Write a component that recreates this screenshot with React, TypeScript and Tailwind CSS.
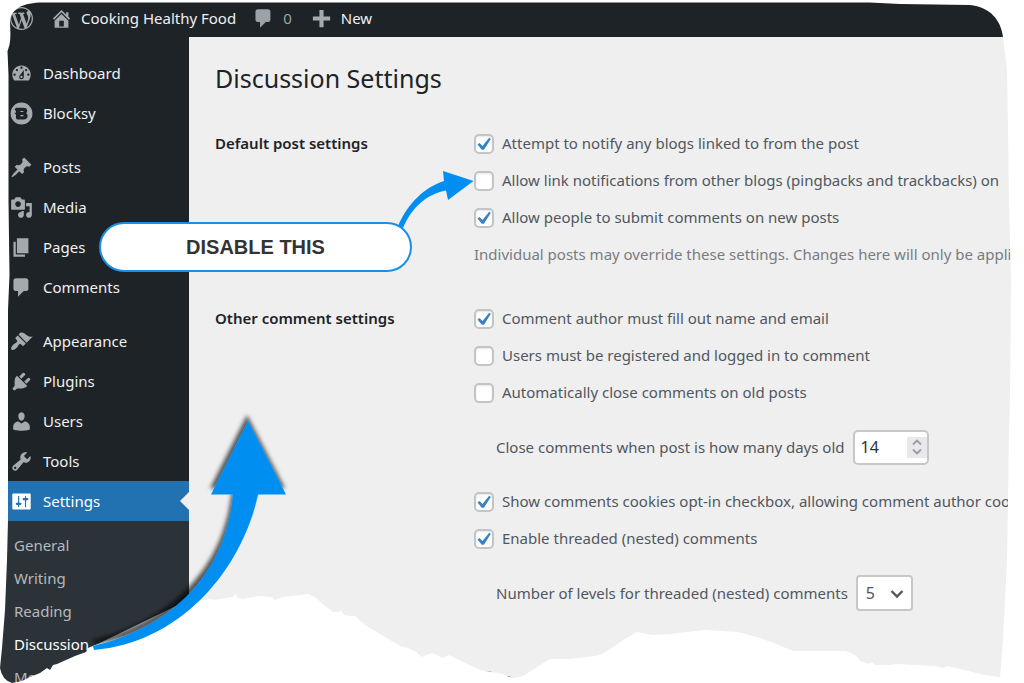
import { useState } from "react";
import type { ReactNode } from "react";
import clsx from "clsx";

const icons = {
    wordpress:
        "M20 10c0-5.51-4.49-10-10-10C4.48 0 0 4.49 0 10c0 5.52 4.48 10 10 10 5.51 0 10-4.48 10-10zM7.78 15.37L4.37 6.22c.55-.02 1.17-.08 1.17-.08.5-.06.44-1.13-.06-1.11 0 0-1.45.11-2.37.11-.18 0-.37 0-.58-.01C4.12 2.69 6.87 1.11 10 1.11c2.33 0 4.45.87 6.05 2.34-.68-.11-1.65.39-1.65 1.58 0 .74.45 1.36.9 2.1.35.61.55 1.36.55 2.46 0 1.49-1.4 5-1.4 5l-3.03-8.37c.54-.02.82-.17.82-.17.5-.05.44-1.25-.06-1.22 0 0-1.44.12-2.38.12-.87 0-2.33-.12-2.33-.12-.5-.03-.56 1.2-.06 1.22l.92.08 1.26 3.41zM17.41 10c.24-.64.74-1.87.43-4.25.7 1.29 1.05 2.71 1.05 4.25 0 3.29-1.73 6.24-4.4 7.78.97-2.59 1.94-5.2 2.92-7.78zM6.1 18.09C3.12 16.65 1.11 13.53 1.11 10c0-1.3.23-2.48.72-3.59C3.25 10.3 4.67 14.2 6.1 18.09zm4.03-6.63l2.58 6.98c-.86.29-1.76.45-2.71.45-.79 0-1.57-.11-2.29-.33.81-2.38 1.62-4.74 2.42-7.1z",
    home: "M16 8.5l1.53 1.53-1.06 1.06L10 4.6l-6.47 6.49-1.06-1.06L10 2.5l4 4v-2h2v4zm-6-2.46l6 5.99V18H4v-5.97zM12 17v-5H8v5h4z",
    comments:
        "M5 2h9c1.1 0 2 .9 2 2v7c0 1.1-.9 2-2 2h-2l-5 5v-5H5c-1.1 0-2-.9-2-2V4c0-1.1.9-2 2-2z",
    plus: "M8.2 2.5h3.6v5.7h5.7v3.6h-5.7v5.7H8.2v-5.7H2.5V8.2h5.7z",
    dashboard:
        "M3.76 16h12.48c1.1-1.37 1.76-3.11 1.76-5 0-4.42-3.58-8-8-8s-8 3.58-8 8c0 1.89.66 3.63 1.76 5zM10 4c.55 0 1 .45 1 1s-.45 1-1 1-1-.45-1-1 .45-1 1-1zM6 6c.55 0 1 .45 1 1s-.45 1-1 1-1-.45-1-1 .45-1 1-1zm8 0c.55 0 1 .45 1 1s-.45 1-1 1-1-.45-1-1 .45-1 1-1zm-5.37 5.55L12 7v6c0 1.1-.9 2-2 2s-2-.9-2-2c0-.57.24-1.08.63-1.45zM4 10c.55 0 1 .45 1 1s-.45 1-1 1-1-.45-1-1 .45-1 1-1zm12 0c.55 0 1 .45 1 1s-.45 1-1 1-1-.45-1-1 .45-1 1-1zm-5 3c0-.55-.45-1-1-1s-1 .45-1 1 .45 1 1 1 1-.45 1-1z",
    blocksy:
        "M10 .5a9.500 9.500 0 1 0 0 19 9.500 9.500 0 0 0 0-19zM5.200 5h6.600c2 0 3.200 1.100 3.200 2.700 0 .9-.4 1.700-1 2.100.8.5 1.300 1.300 1.300 2.400 0 1.800-1.300 3-3.400 3H6.200l-1-1.100v-3.100L3.900 9.400h1.300V8L4 6.500zM9 7.900v.9h2.300c.6 0 .6-.9 0-.9zM9 11.400v.9h2.500c.6 0 .6-.9 0-.9z",
    posts: "M10.44 3.02l1.82-1.82 6.36 6.35-1.83 1.82c-1.05-.68-2.48-.57-3.41.36l-.75.75c-.92.93-1.04 2.35-.35 3.41l-1.83 1.82-2.41-2.41-2.8 2.79c-.42.42-3.38 2.71-3.8 2.29s1.86-3.39 2.28-3.81l2.79-2.79L4.1 9.36l1.83-1.82c1.05.69 2.48.57 3.4-.36l.75-.75c.93-.92 1.05-2.35.36-3.41z",
    media: "M13 11V4c0-.55-.45-1-1-1h-1.67L9 1H5L3.67 3H2c-.55 0-1 .45-1 1v7c0 .55.45 1 1 1h10c.55 0 1-.45 1-1zM7 4.5c1.38 0 2.5 1.12 2.5 2.5S8.38 9.5 7 9.5 4.5 8.38 4.5 7 5.62 4.5 7 4.5zM14 6h5v10.5c0 1.38-1.12 2.5-2.5 2.5S14 17.88 14 16.5s1.12-2.5 2.5-2.5c.17 0 .34.02.5.05V9h-3V6zm-4 8.05V13h2v3.5c0 1.38-1.12 2.5-2.5 2.5S7 17.88 7 16.5 8.12 14 9.5 14c.17 0 .34.02.5.05z",
    pages: "M6 15V2h10v13H6zm-1 1h8v2H3V5h2v11z",
    appearance:
        "M14.48 11.06L7.41 3.99l1.5-1.5c.5-.56 2.3-.47 3.51.32 1.21.8 1.43 1.28 2.91 2.1 1.18.64 2.45 1.26 4.45.85zm-.71.71L6.7 4.7 4.93 6.47c-.39.39-.39 1.02 0 1.41l1.06 1.06c.39.39.39 1.03 0 1.42-.6.6-1.43 1.11-2.21 1.69-.35.26-.7.53-1.01.84C1.43 14.23.4 16.08 1.4 17.07c.99 1 2.84-.03 4.18-1.36.31-.31.58-.66.85-1.02.57-.78 1.08-1.61 1.69-2.21.39-.39 1.02-.39 1.41 0l1.06 1.06c.39.39 1.02.39 1.41 0z",
    plugins:
        "M13.11 4.36L9.87 7.6 8 5.73l3.24-3.24c.35-.34 1.05-.2 1.56.32.52.51.66 1.21.31 1.55zm-8 1.77l.91-1.12 9.01 9.01-1.19.84c-.71.71-2.63 1.16-3.82 1.16H6.14L4.9 17.26c-.59.59-1.54.59-2.12 0-.59-.58-.59-1.53 0-2.12l1.24-1.24v-3.88c0-1.13.4-3.19 1.09-3.89zm7.26 3.97l3.24-3.24c.34-.35 1.04-.21 1.55.31.52.51.66 1.21.31 1.55l-3.24 3.25z",
    users: "M10 9.25c-2.27 0-2.73-3.44-2.73-3.44C7 4.02 7.82 2 9.97 2c2.16 0 2.98 2.02 2.71 3.81 0 0-.41 3.44-2.68 3.44zm0 2.57L12.72 10c2.39 0 4.52 2.33 4.52 4.53v2.49s-3.65 1.13-7.24 1.13c-3.65 0-7.24-1.13-7.24-1.13v-2.49c0-2.25 1.94-4.48 4.47-4.48z",
    tools: "M16.68 9.77c-1.34 1.34-3.3 1.67-4.95.99l-5.41 6.52c-.99.99-2.59.99-3.58 0s-.99-2.59 0-3.57l6.52-5.42c-.68-1.65-.35-3.61.99-4.95 1.28-1.28 3.12-1.62 4.72-1.06l-2.89 2.89 2.82 2.82 2.86-2.87c.53 1.58.18 3.39-1.08 4.65zM3.81 16.21c.4.39 1.04.39 1.43 0 .4-.4.4-1.04 0-1.43-.39-.4-1.03-.4-1.43 0-.39.39-.39 1.03 0 1.43z",
    settings:
        "M18 16V4c0-.55-.45-1-1-1H3c-.55 0-1 .45-1 1v12c0 .55.45 1 1 1h14c.55 0 1-.45 1-1zM8 11h1c.55 0 1 .45 1 1s-.45 1-1 1H8v1.5c0 .28-.22.5-.5.5s-.5-.22-.5-.5V13H6c-.55 0-1-.45-1-1s.45-1 1-1h1V5.5c0-.28.22-.5.5-.5s.5.22.5.5V11zm5-2h-1c-.55 0-1-.45-1-1s.45-1 1-1h1V5.5c0-.28.22-.5.5-.5s.5.22.5.5V7h1c.55 0 1 .45 1 1s-.45 1-1 1h-1v5.5c0 .28-.22.5-.5.5s-.5-.22-.5-.5V9z",
};

type IconName = keyof typeof icons;

const Icon = ({ name, className }: { name: IconName; className?: string }) => (
    <svg
        viewBox="0 0 20 20"
        fill="currentColor"
        fillRule="evenodd"
        aria-hidden="true"
        className={clsx("size-[23px] shrink-0", className)}
    >
        <path d={icons[name]} />
    </svg>
);

const menuGroups: { label: string; icon: IconName }[][] = [
    [
        { label: "Dashboard", icon: "dashboard" },
        { label: "Blocksy", icon: "blocksy" },
    ],
    [
        { label: "Posts", icon: "posts" },
        { label: "Media", icon: "media" },
        { label: "Pages", icon: "pages" },
        { label: "Comments", icon: "comments" },
    ],
    [
        { label: "Appearance", icon: "appearance" },
        { label: "Plugins", icon: "plugins" },
        { label: "Users", icon: "users" },
        { label: "Tools", icon: "tools" },
        { label: "Settings", icon: "settings" },
    ],
];

const submenu = ["General", "Writing", "Reading", "Discussion", "Media"];

const AdminBar = () => (
    <header className="flex h-[37px] shrink-0 items-center bg-[#1d2327] pl-[10px] text-[#f0f0f1]">
        <a href="#" aria-label="WordPress" className="text-[#a7aaad]">
            <Icon name="wordpress" />
        </a>
        <a href="#" className="ml-[17px] flex items-center gap-2">
            <Icon name="home" className="text-[#a7aaad]" />
            Cooking Healthy Food
        </a>
        <a href="#" className="ml-4 flex items-center gap-2 text-[#9ca2a7]">
            <Icon name="comments" />0
        </a>
        <a href="#" className="ml-[18px] flex items-center gap-2">
            <Icon name="plus" className="text-[#a7aaad]" />
            New
        </a>
    </header>
);

const Sidebar = () => (
    <nav className="w-[189px] shrink-0 bg-[#1d2327] pt-4 text-[#f0f0f1]">
        <div className="flex flex-col gap-[14px]">
            {menuGroups.map((group, i) => (
                <ul key={i}>
                    {group.map(({ label, icon }) => {
                        const active = label === "Settings";
                        return (
                            <li key={label}>
                                <a
                                    href="#"
                                    className={clsx(
                                        "relative flex h-10 items-center gap-[10px] pl-[10px]",
                                        active && "bg-[#2271b1] text-white",
                                    )}
                                >
                                    <Icon
                                        name={icon}
                                        className={active ? "text-white" : "text-[#a7aaad]"}
                                    />
                                    {label}
                                    {active && (
                                        <span className="absolute top-1/2 right-0 -translate-y-1/2 border-y-[9px] border-r-[9px] border-y-transparent border-r-[#efefef]" />
                                    )}
                                </a>
                            </li>
                        );
                    })}
                </ul>
            ))}
        </div>
        <ul className="h-full bg-[#2c3338] pt-2 pl-[14px] text-[#b4b9be]">
            {submenu.map((item) => (
                <li key={item}>
                    <a
                        href="#"
                        className={clsx(
                            "flex h-[33px] items-center",
                            item === "Discussion" && "text-white",
                        )}
                    >
                        {item}
                    </a>
                </li>
            ))}
        </ul>
    </nav>
);

const Check = ({ label, checked = false }: { label: string; checked?: boolean }) => {
    const [on, setOn] = useState(checked);

    return (
        <label className="flex h-[37px] items-center gap-2 whitespace-nowrap">
            <span className="grid shrink-0 place-items-center">
                <input
                    type="checkbox"
                    checked={on}
                    onChange={() => setOn(!on)}
                    className="col-start-1 row-start-1 size-5 appearance-none rounded-[5px] border-2 border-[#c3c4c7] bg-white shadow-[inset_0_1px_2px_rgba(0,0,0,0.1)]"
                />
                {on && (
                    <svg
                        viewBox="0 0 20 20"
                        className="pointer-events-none col-start-1 row-start-1 size-5"
                        aria-hidden="true"
                    >
                        <path
                            d="M15.200 3.800l1.600 1.200-6.900 10.700-2.100 0-4.300-5.200 2-1.600 3 3.200z"
                            fill="#3582c4"
                        />
                    </svg>
                )}
            </span>
            {label}
        </label>
    );
};

const Section = ({ title, children }: { title: string; children: ReactNode }) => (
    <section className="flex">
        <h2 className="w-[259px] shrink-0 pt-[6px] leading-6 font-semibold text-[#1d2327]">
            {title}
        </h2>
        <div className="min-w-0 flex-1">{children}</div>
    </section>
);

const SettingsForm = () => (
    <main className="min-w-0 flex-1 overflow-hidden bg-[#efefef] pt-[23px] pl-[26px] text-[#50575e]">
        <h1 className="text-[25px] leading-9 text-[#1d2327]">Discussion Settings</h1>
        <form className="mt-[29px] flex flex-col gap-[27px]">
            <Section title="Default post settings">
                <Check checked label="Attempt to notify any blogs linked to from the post" />
                <Check label="Allow link notifications from other blogs (pingbacks and trackbacks) on" />
                <Check checked label="Allow people to submit comments on new posts" />
                <p className="flex h-[37px] items-center whitespace-nowrap text-[#787c82]">
                    Individual posts may override these settings. Changes here will only be
                    applied to new posts.
                </p>
            </Section>
            <Section title="Other comment settings">
                <Check checked label="Comment author must fill out name and email" />
                <Check label="Users must be registered and logged in to comment" />
                <Check label="Automatically close comments on old posts" />
                <div className="flex h-[72px] items-center gap-2 pl-[22px] whitespace-nowrap">
                    <label htmlFor="close-days">
                        Close comments when post is how many days old
                    </label>
                    <span className="relative">
                        <input
                            id="close-days"
                            type="number"
                            defaultValue={14}
                            className="block h-[35px] w-[76px] appearance-none rounded-[5px] border-2 border-[#c6c7c9] bg-white pl-[6px] text-base text-[#2c3338] [-moz-appearance:textfield] [&::-webkit-inner-spin-button]:appearance-none"
                        />
                        <span className="pointer-events-none absolute inset-y-[7px] right-[2px] grid w-5 place-items-center bg-[#e9e9ed]">
                            <svg viewBox="0 0 10 16" className="h-4 w-[10px]" aria-hidden="true">
                                <path
                                    d="M1 5.500l4-4 4 4M1 10.500l4 4 4-4"
                                    fill="none"
                                    stroke="#9c9c9c"
                                    strokeWidth="1.800"
                                />
                            </svg>
                        </span>
                    </span>
                </div>
                <Check
                    checked
                    label="Show comments cookies opt-in checkbox, allowing comment author cookies to be set"
                />
                <Check checked label="Enable threaded (nested) comments" />
                <div className="flex h-[72px] items-center gap-2 pl-[22px] whitespace-nowrap">
                    <label htmlFor="thread-levels">
                        Number of levels for threaded (nested) comments
                    </label>
                    <span className="relative">
                        <select
                            id="thread-levels"
                            defaultValue="5"
                            className="block h-9 w-[57px] appearance-none rounded border-2 border-[#c6c7c9] bg-white pl-2 text-base text-[#50575e]"
                        >
                            {["2", "3", "4", "5", "6", "7", "8", "9", "10"].map((n) => (
                                <option key={n}>{n}</option>
                            ))}
                        </select>
                        <svg
                            viewBox="0 0 14 10"
                            className="pointer-events-none absolute top-[14px] right-[9px] h-[10px] w-[14px]"
                            aria-hidden="true"
                        >
                            <path
                                d="M1.500 2L7 7.500 12.500 2"
                                fill="none"
                                stroke="#50575e"
                                strokeWidth="2.400"
                            />
                        </svg>
                    </span>
                </div>
                <div className="pt-[33px]">
                    <Check label="Break comments into pages" />
                </div>
            </Section>
        </form>
    </main>
);

// White paper cut-out around the page, everything outside the ragged outline
const TornEdge = () => (
    <svg
        viewBox="0 0 1024 683"
        preserveAspectRatio="none"
        className="pointer-events-none absolute inset-0 size-full"
        aria-hidden="true"
    >
        <path
            fill="#fff"
            fillRule="evenodd"
            d="M-2-2H1026V685H-2Z M45 2.500C25 2 10 8 10 22C11 40 10 45 7.500 51L8.500 75V200L9.500 275L8 310V520L7 560L5 610L2 648L0 668Q2 680 12 683L22 681L30 677L40 673L47 668L50 670L53 665L57 664L75 656L86 652L88 648L100 643L108 639L176 606L189 602L205 600L211 599L214 600L232 597L236 594L237 598L243 599L258 596L272 597L275 600L283 597L300 595L308 594L315 597L325 606L333 612L339 612L341 610L344 615L350 616L355 616L365 625L380 634L390 640L400 646L408 648L416 652L422 657L432 653L443 658L449 655L465 663L480 670L490 672L500 673L512 678L520 677L525 675L537 667L550 659L570 659L595 656L602 654L610 649L625 639L637 632L652 635L670 634L705 630L738 632Q765 638 793 651L845 651Q857 654 860 661L869 664L872 662L875 665L890 665L897 664L935 666L943 668L947 666L960 669L985 675L1000 677L1003 640L1007 560L1008 500L1009 430L1010 400L1011 280L1009 200L1008 130L1007 70L1003 37C1001 20 990 7 970 5L900 4L870 2.500Z"
        />
    </svg>
);

const Annotations = () => (
    <>
        <svg
            width="1024"
            height="683"
            viewBox="0 0 1024 683"
            className="pointer-events-none absolute top-0 left-0"
            aria-hidden="true"
        >
            <defs>
                <filter id="arrow-shadow" x="-20%" y="-20%" width="140%" height="140%">
                    <feDropShadow dx="-1" dy="-6" stdDeviation="2" floodOpacity="0.65" />
                </filter>
            </defs>
            <path
                d="M93 646C170 628 226 575 233 494.500H211L248 421L286 494.500H258C243 565 185 642 94 650Z"
                fill="#008ff0"
                filter="url(#arrow-shadow)"
            />
            <path
                d="M398 226C408 203 425 187 444 181L443 171L473.500 181L448 200L446 190.500C427 194 412 207 403 228Z"
                fill="#008ff0"
            />
        </svg>
        <div className="absolute top-[222px] left-[99px] flex h-[50px] w-[313px] items-center justify-center rounded-full border-2 border-[#1a8fe8] bg-white font-['Liberation_Sans',Arial,sans-serif] text-xl font-bold text-[#333]">
            DISABLE THIS
        </div>
    </>
);

const App = () => (
    <div className="relative flex h-screen flex-col overflow-hidden bg-white font-['Noto_Sans','Open_Sans',sans-serif] text-[15px]">
        <AdminBar />
        <div className="flex min-h-0 flex-1">
            <Sidebar />
            <SettingsForm />
        </div>
        <TornEdge />
        <Annotations />
    </div>
);

export default App;
